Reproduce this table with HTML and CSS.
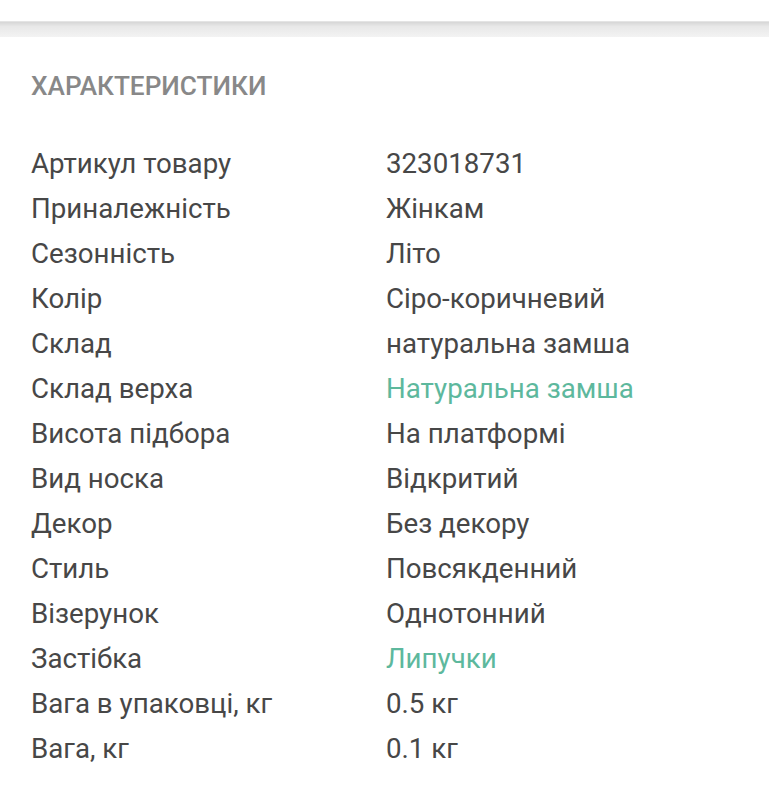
FILE: index.html
```html
<!DOCTYPE html>
<html lang="uk">
<head>
<meta charset="utf-8">
<link rel="stylesheet" href="styles.css">
</head>
<body>
<div class="topbar"></div>
<div class="divider"></div>
<section class="specs">
  <h2 class="specs-title">ХАРАКТЕРИСТИКИ</h2>
  <dl class="specs-list">
    <dt>Артикул товару</dt><dd>323018731</dd>
    <dt>Приналежність</dt><dd>Жінкам</dd>
    <dt>Сезонність</dt><dd>Літо</dd>
    <dt>Колір</dt><dd>Сіро-коричневий</dd>
    <dt>Склад</dt><dd>натуральна замша</dd>
    <dt>Склад верха</dt><dd class="link">Натуральна замша</dd>
    <dt>Висота підбора</dt><dd>На платформі</dd>
    <dt>Вид носка</dt><dd>Відкритий</dd>
    <dt>Декор</dt><dd>Без декору</dd>
    <dt>Стиль</dt><dd>Повсякденний</dd>
    <dt>Візерунок</dt><dd>Однотонний</dd>
    <dt>Застібка</dt><dd class="link">Липучки</dd>
    <dt>Вага в упаковці, кг</dt><dd>0.5 кг</dd>
    <dt>Вага, кг</dt><dd>0.1 кг</dd>
  </dl>
</section>
</body>
</html>
```
FILE: styles.css
```css
html, body {
  margin: 0;
  padding: 0;
  background: #fff;
  font-family: Roboto, "Noto Sans", sans-serif;
}
.topbar {
  height: 21px;
  background: #fff;
}
.divider {
  height: 16px;
  background: linear-gradient(to bottom, #d6d6d6 0%, #e8e8e8 30%, #f3f3f3 100%);
  border-top: 1px solid #e4e4e4;
  box-sizing: border-box;
}
.specs {
  padding: 0 31px;
}
.specs-title {
  margin: 35px 0 0;
  font-size: 26.2px;
  font-weight: 500;
  color: #888;
  line-height: 28px;
}
.specs-list {
  display: grid;
  grid-template-columns: 355px 1fr;
  grid-auto-rows: 45px;
  margin: 41px 0 0;
  font-size: 27.7px;
  color: #474747;
}
.specs-list dt, .specs-list dd {
  margin: 0;
  line-height: 45px;
  white-space: nowrap;
}
.specs-list .link {
  color: #5db89d;
}
```
